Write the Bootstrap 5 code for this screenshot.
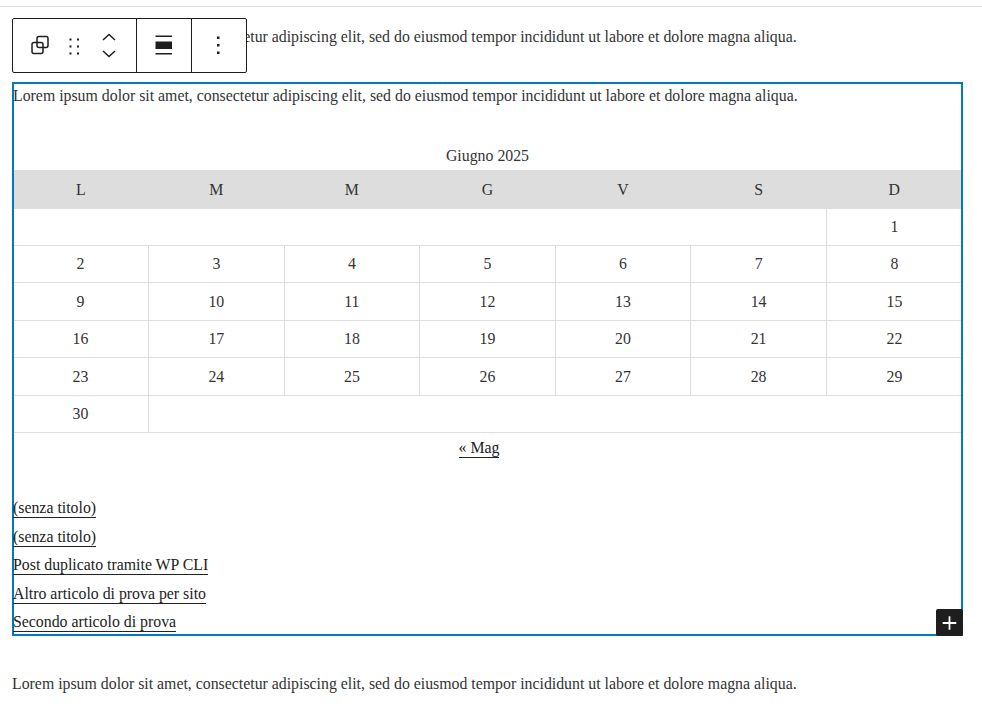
<!DOCTYPE html>
<html lang="it">
<head>
  <meta charset="UTF-8">
  <title>Editor</title>
  <meta name="viewport" content="width=device-width, initial-scale=1">
  <link href="https://cdn.jsdelivr.net/npm/bootstrap@5.3.3/dist/css/bootstrap.min.css" rel="stylesheet">
  <style>
    body {
      background: #fff;
      color: #333;
      font-family: "Liberation Serif", serif;
      font-size: 15.84px;
      line-height: 28.5px;
    }
    .top-rule { height: 1px; margin-top: 6px; background: #e0e0e0; }
    .editor-area { position: relative; padding: 16px 19px 0 12px; }
    .intro-text { margin: 0 0 30.5px; }
    .outro-text { margin: 33.5px 0 0; }

    .block-toolbar {
      position: absolute; top: 11px; left: 12px;
      width: 235px; height: 55px;
      background: #fff; border: 1px solid #1e1e1e; border-radius: 2px;
      color: #1e1e1e;
    }
    .tool-group { border-right: 1px solid #1e1e1e; }
    .tool-group:last-child { border-right: 0; }
    .group-main { width: 124px; padding-left: 15px; }
    .group-align { width: 55px; }
    .group-more { flex: 1; }
    .drag-handle { margin-left: 16px; }
    .mover-arrows { gap: 9px; margin-left: 22px; }

    .selected-block {
      position: relative;
      height: 554px;
      border: 2px solid #007cba;
    }
    .selected-block .intro-line { margin: -2px 0 0 -1px; height: 47px; }
    .cal-wrap { overflow: hidden; }
    .cal-table {
      width: calc(100% + 2px); margin-left: -1px;
      table-layout: fixed; border-collapse: collapse; text-align: center;
    }
    .cal-table caption {
      caption-side: top; padding: 0; color: #333; text-align: center;
      height: 41px; line-height: 28.5px; padding-top: 13px;
    }
    .cal-table th { background: #ddd; font-weight: 400; height: 39px; padding: 2px 0 0; }
    .cal-table td { height: 37.4px; padding: 1px 0 0; border-bottom: 1px solid #ddd; border-right: 1px solid #ddd; }
    .cal-table td:last-child { border-right: 0; }
    .cal-table tr.first-week td { height: 36.5px; padding-top: 0; }
    .cal-nav { text-align: center; margin-right: 17px; line-height: 30px; height: 46.5px; }
    .cal-nav a, .post-list a {
      color: #222; text-decoration: none; border-bottom: 1px solid #222; padding-bottom: 1px;
    }
    .post-list { list-style: none; margin: 0 0 0 -1px; padding: 15px 0 0; }
    .add-block {
      position: absolute; right: -2px; bottom: -2px;
      width: 27px; height: 27px;
      background: #1e1e1e; border-radius: 2px;
      border: 0; padding: 0; color: #fff;
    }
  </style>
</head>
<body>
  <div class="top-rule"></div>
  <div class="editor-area">

    <!-- Block toolbar -->
    <div class="block-toolbar d-flex">
      <div class="tool-group group-main d-flex align-items-center">
        <svg width="24" height="24" viewBox="0 0 24 24" fill="none" stroke="#1e1e1e" stroke-width="1.5">
          <rect x="9" y="2.5" width="11" height="11" rx="2"/>
          <rect x="4" y="8.5" width="11" height="11" rx="2"/>
        </svg>
        <svg class="drag-handle" width="12" height="24" viewBox="0 0 12 24" fill="#1e1e1e">
          <rect x="1.5" y="4.5" width="2" height="2"/><rect x="9" y="4.5" width="2" height="2"/>
          <rect x="1.5" y="11.5" width="2" height="2"/><rect x="9" y="11.5" width="2" height="2"/>
          <rect x="1.5" y="18.5" width="2" height="2"/><rect x="9" y="18.5" width="2" height="2"/>
        </svg>
        <div class="mover-arrows d-flex flex-column">
          <svg class="d-block" width="14" height="8" viewBox="0 0 14 8" fill="none" stroke="#1e1e1e" stroke-width="1.5"><path d="M1 7l6-5.5L13 7"/></svg>
          <svg class="d-block" width="14" height="8" viewBox="0 0 14 8" fill="none" stroke="#1e1e1e" stroke-width="1.5"><path d="M1 1l6 5.5L13 1"/></svg>
        </div>
      </div>
      <div class="tool-group group-align d-flex align-items-center justify-content-center">
        <svg width="24" height="24" viewBox="0 0 24 24" fill="#1e1e1e">
          <rect x="3.5" y="1.5" width="16.5" height="1.5"/>
          <rect x="3.5" y="7.5" width="16.5" height="7.5"/>
          <rect x="3.5" y="19" width="16.5" height="1.5"/>
        </svg>
      </div>
      <div class="tool-group group-more d-flex align-items-center justify-content-center">
        <svg width="24" height="24" viewBox="0 0 24 24" fill="#1e1e1e">
          <rect x="10" y="2.5" width="2.5" height="2.5"/>
          <rect x="10" y="10" width="2.5" height="2.5"/>
          <rect x="10" y="17.5" width="2.5" height="2.5"/>
        </svg>
      </div>
    </div>

    <p class="intro-text">Lorem ipsum dolor sit amet, consectetur adipiscing elit, sed do eiusmod tempor incididunt ut labore et dolore magna aliqua.</p>

    <!-- Selected group block -->
    <div class="selected-block">
      <p class="intro-line">Lorem ipsum dolor sit amet, consectetur adipiscing elit, sed do eiusmod tempor incididunt ut labore et dolore magna aliqua.</p>

      <div class="cal-wrap">
        <table class="cal-table">
          <caption>Giugno 2025</caption>
          <thead>
            <tr><th>L</th><th>M</th><th>M</th><th>G</th><th>V</th><th>S</th><th>D</th></tr>
          </thead>
          <tbody>
            <tr class="first-week"><td colspan="6"></td><td>1</td></tr>
            <tr><td>2</td><td>3</td><td>4</td><td>5</td><td>6</td><td>7</td><td>8</td></tr>
            <tr><td>9</td><td>10</td><td>11</td><td>12</td><td>13</td><td>14</td><td>15</td></tr>
            <tr><td>16</td><td>17</td><td>18</td><td>19</td><td>20</td><td>21</td><td>22</td></tr>
            <tr><td>23</td><td>24</td><td>25</td><td>26</td><td>27</td><td>28</td><td>29</td></tr>
            <tr><td>30</td><td colspan="6"></td></tr>
          </tbody>
        </table>
      </div>
      <div class="cal-nav"><a href="#">« Mag</a></div>

      <ul class="post-list">
        <li><a href="#">(senza titolo)</a></li>
        <li><a href="#">(senza titolo)</a></li>
        <li><a href="#">Post duplicato tramite WP CLI</a></li>
        <li><a href="#">Altro articolo di prova per sito</a></li>
        <li><a href="#">Secondo articolo di prova</a></li>
      </ul>

      <button class="add-block d-flex align-items-center justify-content-center" type="button" aria-label="Aggiungi blocco">
        <svg width="24" height="24" viewBox="0 0 24 24" fill="#fff"><path d="M10.6 5.2h1.8v5.9h5.9v1.8h-5.9v5.9h-1.8v-5.9H4.7v-1.8h5.9z"/></svg>
      </button>
    </div>

    <p class="outro-text">Lorem ipsum dolor sit amet, consectetur adipiscing elit, sed do eiusmod tempor incididunt ut labore et dolore magna aliqua.</p>
  </div>
  <script src="https://cdn.jsdelivr.net/npm/bootstrap@5.3.3/dist/js/bootstrap.bundle.min.js"></script>
</body>
</html>
